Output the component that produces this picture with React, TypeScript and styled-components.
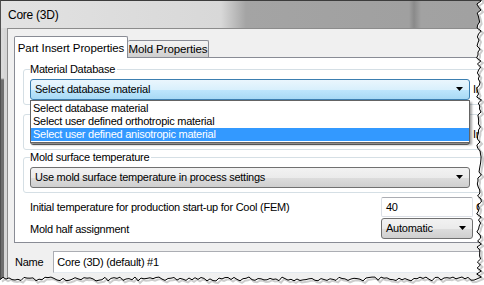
import React from "react";
import styled, { createGlobalStyle, css } from "styled-components";

const GlobalStyle = createGlobalStyle`
  html, body {
    margin: 0;
    padding: 0;
    background: #fff;
  }
  body {
    font-family: "Liberation Sans", Arial, sans-serif;
    font-size: 11px;
    letter-spacing: -0.25px;
    color: #000;
  }
`;

const materials = [
  "Select database material",
  "Select user defined orthotropic material",
  "Select user defined anisotropic material",
];

// pseudo random, so the torn edge is the same on every render
const makeRandom = (seed: number) => {
  let s = seed;
  return () => {
    s = (s * 9301 + 49297) % 233280;
    return s / 233280;
  };
};

const tornPoints = () => {
  const rnd = makeRandom(17);
  const pts: string[] = [];
  for (let y = -2; y <= 279; y += 3) {
    pts.push(`${(479 + (rnd() - 0.5) * 5).toFixed(1)},${y}`);
  }
  for (let x = 477; x >= -2; x -= 3) {
    pts.push(`${x},${(279 + (rnd() - 0.5) * 4).toFixed(1)}`);
  }
  return pts;
};

const Arrow = () => (
  <svg width="8" height="4" viewBox="0 0 8 4">
    <path d="M0 0 H7 L3.5 4 Z" fill="#000" />
  </svg>
);

const TornEdge = () => {
  const pts = tornPoints();
  const line = pts.join(" ");
  return (
    <EdgeLayer viewBox="0 0 484 285" width="484" height="285">
      <path
        d={`M-5 -5 H490 V290 H-5 Z M${pts.join(" L")} L-2,-2 Z`}
        fill="#fff"
        fillRule="evenodd"
      />
      <polyline
        points={line}
        transform="translate(2 2)"
        fill="none"
        stroke="#b8b8b8"
        strokeWidth="2"
        opacity="0.7"
      />
      <polyline points={line} fill="none" stroke="#000" strokeWidth="1" />
    </EdgeLayer>
  );
};

const App: React.FC = () => {
  return (
    <>
      <GlobalStyle />
      <Stage>
        <Window>
          <TitleBar>
            <span className="title">Core (3D)</span>
          </TitleBar>
          <FrameBody>
            <SideFrame />
            <Client>
              <TabStrip>
                <Tab $active>Part Insert Properties</Tab>
                <Tab>Mold Properties</Tab>
              </TabStrip>
              <TabPage>
                <Group $top={11}>
                  <GroupLabel>Material Database</GroupLabel>
                  <FieldRow>
                    <ComboWrap>
                      <Combo $focused>
                        <span>Select database material</span>
                        <Arrow />
                      </Combo>
                      <DropList>
                        {materials.map((m, i) => (
                          <DropItem key={m} $selected={i === 2}>
                            {m}
                          </DropItem>
                        ))}
                      </DropList>
                    </ComboWrap>
                    <SideText>In</SideText>
                  </FieldRow>
                </Group>
                {/* this group is hidden behind the open list */}
                <Group $top={9}>
                  <GroupLabel />
                  <FieldRow>
                    <Combo>
                      <span />
                      <Arrow />
                    </Combo>
                    <SideText>In</SideText>
                  </FieldRow>
                </Group>
                <Group $top={7}>
                  <GroupLabel>Mold surface temperature</GroupLabel>
                  <FieldRow>
                    <Combo>
                      <span>Use mold surface temperature in process settings</span>
                      <Arrow />
                    </Combo>
                  </FieldRow>
                </Group>
                <PropRow $top={4}>
                  <span>Initial temperature for production start-up for Cool (FEM)</span>
                  <TextBox>40</TextBox>
                  <SideText>C</SideText>
                </PropRow>
                <PropRow $top={1}>
                  <span>Mold half assignment</span>
                  <Combo $width={92}>
                    <span>Automatic</span>
                    <Arrow />
                  </Combo>
                </PropRow>
              </TabPage>
              <NameRow>
                <span>Name</span>
                <NameBox>Core (3D) (default) #1</NameBox>
              </NameRow>
            </Client>
          </FrameBody>
        </Window>
        <TornEdge />
      </Stage>
    </>
  );
};

const Stage = styled.div`
  position: relative;
  width: 484px;
  height: 285px;
  overflow: hidden;
`;

const Window = styled.div`
  display: flex;
  flex-direction: column;
  width: 520px;
  height: 300px;
  box-sizing: border-box;
  border-top: 1px solid #3c3c3c;
  border-left: 1px solid #505050;
  background: #d9d9d9;
`;

const TitleBar = styled.div`
  display: flex;
  align-items: center;
  height: 27px;
  padding-left: 7px;
  background: linear-gradient(
    to right,
    #e2e2e2 0,
    #d8d8d8 220px,
    #a4a4a4 245px,
    #a0a0a0 408px,
    #8a8a8a 413px,
    #a2a2a2 420px,
    #a0a0a0 100%
  );

  .title {
    font-size: 12px;
    line-height: 14px;
  }
`;

const FrameBody = styled.div`
  display: flex;
  flex: 1;
`;

const SideFrame = styled.div`
  width: 6px;
  background:
    linear-gradient(to bottom, #dadada 0, #dadada 50px, #6e6e6e 52px) 0 0 / 3px 100% no-repeat,
    #d6d6d6;
`;

const Client = styled.div`
  display: flex;
  flex-direction: column;
  flex: 1;
  padding: 7px 0 0 6px;
  background: #f0f0f0;
  border-top: 1px solid #8c8c8c;
  border-left: 1px solid #8c8c8c;
`;

const TabStrip = styled.div`
  display: flex;
  align-items: flex-end;
  height: 21px;
`;

const Tab = styled.div<{ $active?: boolean }>`
  display: flex;
  align-items: center;
  justify-content: center;
  box-sizing: border-box;
  white-space: nowrap;
  font-size: 11.5px;
  letter-spacing: -0.1px;
  border: 1px solid #898c95;
  border-bottom: none;
  border-radius: 2px 2px 0 0;

  ${(p) =>
    p.$active
      ? css`
          position: relative;
          z-index: 1;
          width: 114px;
          height: 22px;
          margin-bottom: -1px;
          background: #fff;
        `
      : css`
          width: 81px;
          height: 17px;
          border-left: none;
          background: linear-gradient(#f3f3f3 0, #ebebeb 50%, #dddddd 51%, #cfcfcf 100%);
        `}
`;

const TabPage = styled.div`
  position: relative;
  width: 490px;
  height: 186px;
  box-sizing: border-box;
  padding-left: 8px;
  border: 1px solid #898c95;
  background: #fff;
`;

const Group = styled.div<{ $top: number }>`
  width: 480px;
  margin-top: ${(p) => p.$top}px;
  padding: 0 0 4px 6px;
  border: 1px solid #d5dfe5;
  border-radius: 3px;
`;

const GroupLabel = styled.div`
  width: fit-content;
  min-height: 13px;
  margin: -7px 0 0 0;
  padding: 0 2px 0 0;
  line-height: 13px;
  background: #fff;
`;

const FieldRow = styled.div`
  display: flex;
  align-items: center;
  gap: 3px;
  margin-top: 3px;
`;

const ComboWrap = styled.div`
  position: relative;
`;

const Combo = styled.div<{ $focused?: boolean; $width?: number }>`
  display: flex;
  align-items: center;
  justify-content: space-between;
  flex-shrink: 0;
  width: ${(p) => p.$width ?? 440}px;
  height: 21px;
  box-sizing: border-box;
  padding: 0 5px 1px 4px;
  white-space: nowrap;
  border: 1px solid #707070;
  border-radius: 3px;
  background: linear-gradient(#f2f2f2 0, #ebebeb 50%, #dddddd 51%, #cfcfcf 100%);

  ${(p) =>
    p.$focused &&
    css`
      border-color: #3c7fb1;
      background: linear-gradient(#eaf6fd 0, #d9f0fc 50%, #bee6fd 51%, #a7d9f5 100%);
    `}
`;

const DropList = styled.div`
  position: absolute;
  top: 21px;
  left: 0;
  z-index: 2;
  width: 440px;
  box-sizing: border-box;
  padding: 1px 0 1px;
  border: 1px solid #646464;
  background: #fff;
  box-shadow: 2px 2px 2px rgba(0, 0, 0, 0.35);
`;

const DropItem = styled.div<{ $selected?: boolean }>`
  height: 13px;
  line-height: 13px;
  padding-left: 2px;
  white-space: nowrap;
  background: ${(p) => (p.$selected ? "#3399ff" : "transparent")};
  color: ${(p) => (p.$selected ? "#fff" : "#000")};
`;

const SideText = styled.span`
  line-height: 13px;
  white-space: nowrap;
`;

const PropRow = styled.div<{ $top: number }>`
  display: grid;
  grid-template-columns: 348px 92px auto;
  align-items: center;
  column-gap: 3px;
  margin-top: ${(p) => p.$top}px;
  padding-left: 7px;
  white-space: nowrap;
`;

const TextBox = styled.div`
  display: flex;
  align-items: center;
  width: 92px;
  height: 20px;
  box-sizing: border-box;
  padding-left: 4px;
  border: 1px solid #dbdfe6;
  border-top-color: #abadb3;
  border-radius: 2px;
  background: #fff;
`;

const NameRow = styled.div`
  display: flex;
  align-items: center;
  gap: 10px;
  margin-top: 8px;
  padding-left: 1px;
`;

const NameBox = styled.div`
  display: flex;
  align-items: center;
  width: 460px;
  height: 22px;
  box-sizing: border-box;
  padding-left: 3px;
  border: 1px solid #abadb3;
  border-right-color: #dbdfe6;
  border-bottom-color: #e3e9ef;
  background: #fff;
`;

const EdgeLayer = styled.svg`
  position: absolute;
  top: 0;
  left: 0;
  pointer-events: none;
  z-index: 5;
`;

export default App;
